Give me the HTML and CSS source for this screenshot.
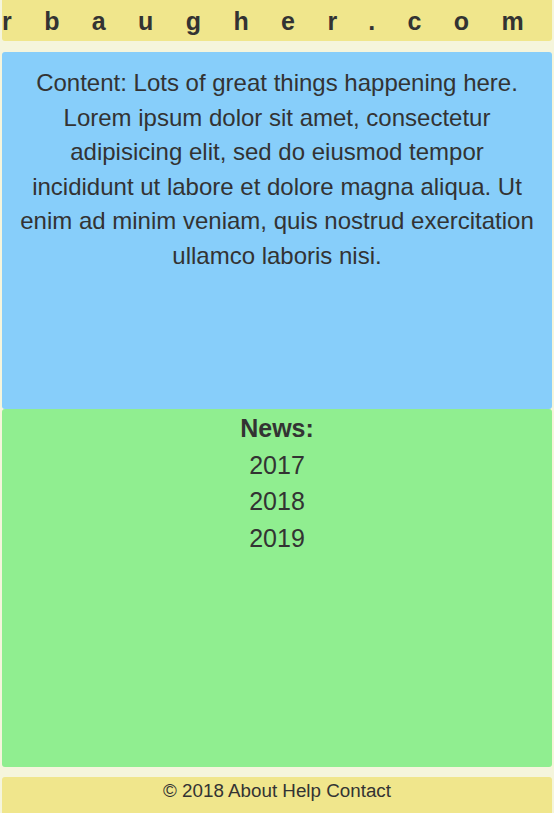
FILE: index.html
```html
<!DOCTYPE html>
<html lang="en">
<head>
<meta charset="utf-8">
<title>rbaugher.com</title>
<link rel="stylesheet" href="styles.css">
</head>
<body>
<div class="page">
  <header class="header"><span class="spaced">rbaugher.co</span>m</header>
  <main class="content">Content: Lots of great things happening here. Lorem ipsum dolor sit amet, consectetur adipisicing elit, sed do eiusmod tempor incididunt ut labore et dolore magna aliqua. Ut enim ad minim veniam, quis nostrud exercitation ullamco laboris nisi.</main>
  <aside class="news">
    <div class="news-title">News:</div>
    <div>2017</div>
    <div>2018</div>
    <div>2019</div>
  </aside>
  <footer class="footer">© 2018 About Help Contact</footer>
</div>
</body>
</html>
```
FILE: styles.css
```css
html, body {
  margin: 0;
  padding: 0;
  background: #f5f5dc;
}
body {
  font-family: "Liberation Sans", Arial, sans-serif;
  color: #333;
}
.page {
  display: flex;
  flex-direction: column;
  padding: 0 2px;
}
.header {
  height: 41px;
  flex: none;
  box-sizing: border-box;
  background: #f0e68c;
  border-radius: 0 0 3px 3px;
  font-size: 25px;
  font-weight: bold;
  text-align: center;
  line-height: 42px;
  padding-right: 29px;
  white-space: nowrap;
}
.spaced {
  letter-spacing: 32.4px;
}
.content {
  height: 357px;
  box-sizing: border-box;
  flex: none;
  background: #87cefa;
  border-radius: 3px;
  font-size: 24px;
  line-height: 34.6px;
  text-align: center;
  padding: 14px 15px 0;
  margin-top: 11px;
}
.news {
  height: 358px;
  box-sizing: border-box;
  flex: none;
  background: #90ee90;
  border-radius: 3px;
  font-size: 25px;
  line-height: 36.5px;
  text-align: center;
  padding-top: 1px;
}
.news-title {
  font-weight: bold;
}
.footer {
  margin-top: 10px;
  background: #f0e68c;
  border-radius: 3px;
  font-size: 18.8px;
  line-height: 26px;
  padding: 1px 0 12px;
  text-align: center;
}
```
